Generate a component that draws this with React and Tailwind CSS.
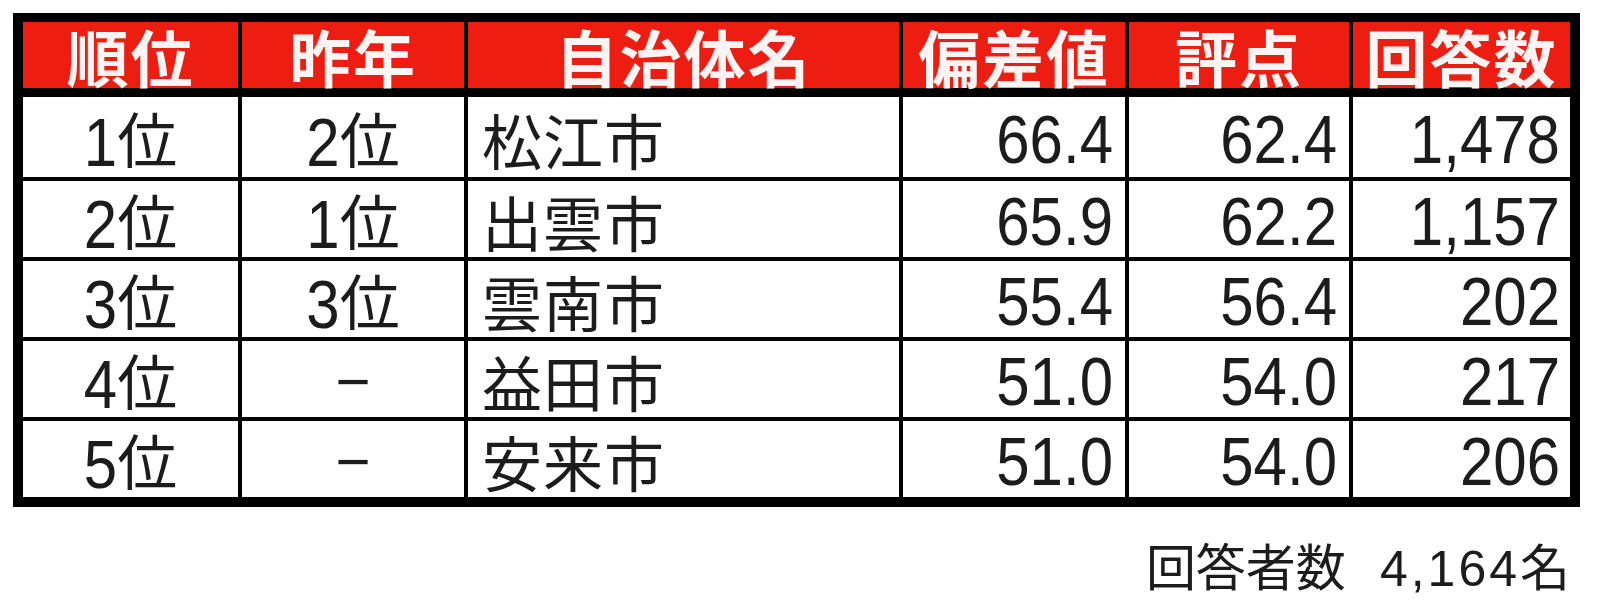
import React from 'react';

const rows = [
  { rank: '1', prev: '2', name: '松江市', dev: '66.4', score: '62.4', count: '1,478' },
  { rank: '2', prev: '1', name: '出雲市', dev: '65.9', score: '62.2', count: '1,157' },
  { rank: '3', prev: '3', name: '雲南市', dev: '55.4', score: '56.4', count: '202' },
  { rank: '4', prev: null, name: '益田市', dev: '51.0', score: '54.0', count: '217' },
  { rank: '5', prev: null, name: '安来市', dev: '51.0', score: '54.0', count: '206' },
];

const headers = ['順位', '昨年', '自治体名', '偏差値', '評点', '回答数'];

const cjk = "font-['Noto_Sans_CJK_JP','Noto_Sans',sans-serif]";
const latin = "font-['Liberation_Sans',Arial,sans-serif]";

// digits in the source are tall and narrow, so stretch them a bit
const Num = ({ children }) => (
  <span className={`inline-block scale-y-[1.15] ${latin}`}>{children}</span>
);

const Rank = ({ n }) => (
  <span className="inline-flex items-baseline">
    <Num>{n}</Num>
    <span className={cjk}>位</span>
  </span>
);

export default function App() {
  return (
    <div className="w-[1600px] h-[613px] bg-white pt-[13px] pl-[13px]">
      <div className="w-[1567px]">
        <div className="grid grid-cols-[215px_226px_435px_226px_224px_221px] border-[10px] border-t-[9px] border-black text-[#1c1c1c]">
          {headers.map((h, i) => (
            <div
              key={h}
              className={`h-[75px] bg-[#ee1d12] border-b-[9px] border-black flex items-center justify-center text-[62px] font-bold leading-none text-[#fff4f4] tracking-[2px] pt-[2px] ${cjk} ${
                i > 0 ? 'border-l-[4px]' : ''
              }`}
            >
              {h}
            </div>
          ))}

          {rows.map((r, ri) => {
            const top = ri > 0 ? 'border-t-[4px]' : '';
            const cell = `h-[80px] border-black flex items-center text-[60px] leading-none ${top}`;
            return (
              <React.Fragment key={r.name}>
                <div className={`${cell} justify-center pt-[6px]`}>
                  <Rank n={r.rank} />
                </div>
                <div className={`${cell} border-l-[4px] justify-center pt-[6px]`}>
                  {r.prev ? <Rank n={r.prev} /> : <span className={latin}>−</span>}
                </div>
                <div className={`${cell} border-l-[4px] pl-[14px] pt-[4px] tracking-[1px] ${cjk}`}>
                  {r.name}
                </div>
                <div className={`${cell} border-l-[4px] justify-end pr-[12px] pt-[6px]`}>
                  <Num>{r.dev}</Num>
                </div>
                <div className={`${cell} border-l-[4px] justify-end pr-[12px] pt-[6px]`}>
                  <Num>{r.score}</Num>
                </div>
                <div className={`${cell} border-l-[4px] justify-end pr-[10px] pt-[6px]`}>
                  <Num>{r.count}</Num>
                </div>
              </React.Fragment>
            );
          })}
        </div>

        <div className="mt-[32px] pr-[10px] flex justify-end items-baseline text-[50px] leading-none text-[#1c1c1c]">
          <span className={cjk}>回答者数</span>
          <span className={`ml-[34px] tracking-[3px] ${latin}`}>4,164</span>
          <span className={cjk}>名</span>
        </div>
      </div>
    </div>
  );
}
